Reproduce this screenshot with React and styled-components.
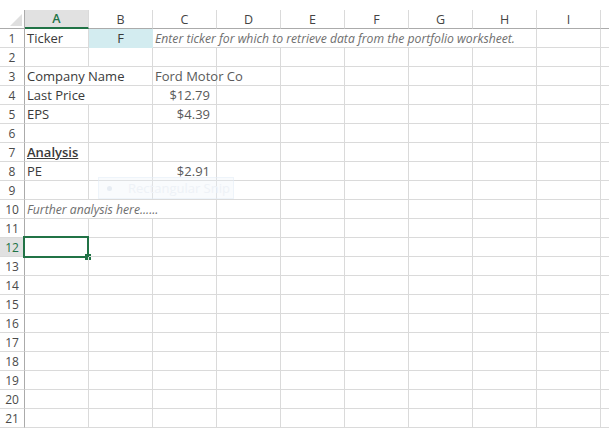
import React from "react";
import styled, { createGlobalStyle } from "styled-components";

const GlobalStyle = createGlobalStyle`
  html, body {
    margin: 0;
    padding: 0;
    background: #ffffff;
    overflow: hidden;
  }
  body {
    font-family: "Open Sans", "Noto Sans", sans-serif;
  }
`;

const COLS = ["A", "B", "C", "D", "E", "F", "G", "H", "I"];
const ROW_COUNT = 21;

// what sits in each row; span = how many columns the text runs over
const DATA = {
  1: [
    { col: 0, text: "Ticker", tone: "label" },
    { col: 1, text: "F", align: "center", fill: "#d3ecf0" },
    {
      col: 2,
      span: 6,
      text: "Enter ticker for which to retrieve data from the portfolio worksheet.",
      tone: "note",
    },
  ],
  3: [
    { col: 0, span: 2, text: "Company Name", tone: "label" },
    { col: 2, text: "Ford Motor Co", tone: "value" },
  ],
  4: [
    { col: 0, span: 2, text: "Last Price", tone: "label" },
    { col: 2, text: "$12.79", tone: "value", align: "right" },
  ],
  5: [
    { col: 0, text: "EPS", tone: "label" },
    { col: 2, text: "$4.39", tone: "value", align: "right" },
  ],
  7: [{ col: 0, text: "Analysis", tone: "heading" }],
  8: [
    { col: 0, text: "PE", tone: "label" },
    { col: 2, text: "$2.91", tone: "value", align: "right" },
  ],
  10: [{ col: 0, span: 3, text: "Further analysis here......", tone: "note" }],
};

const SELECTED_ROW = 12;

const App = () => {
  const rows = [];
  for (let r = 1; r <= ROW_COUNT; r++) {
    const items = DATA[r] || [];
    const cells = [];
    let c = 0;
    while (c < COLS.length + 1) {
      const item = items.find((it) => it.col === c);
      if (item) {
        cells.push(
          <Cell
            key={c}
            $span={item.span || 1}
            $align={item.align}
            $tone={item.tone}
            $fill={item.fill}
          >
            {item.text}
          </Cell>
        );
        c += item.span || 1;
      } else {
        cells.push(
          <Cell key={c}>
            {r === SELECTED_ROW && c === 0 && (
              <Selection>
                <FillHandle />
              </Selection>
            )}
          </Cell>
        );
        c += 1;
      }
    }
    rows.push(
      <React.Fragment key={r}>
        <RowHead $active={r === SELECTED_ROW}>{r}</RowHead>
        {cells}
      </React.Fragment>
    );
  }

  return (
    <>
      <GlobalStyle />
      <Page>
        <Sheet>
          <Corner>
            <CornerMark />
          </Corner>
          {COLS.map((l, i) => (
            <ColHead key={l} $active={i === 0}>
              {l}
            </ColHead>
          ))}
          <ColHead />
          {rows}
        </Sheet>
        <SnipGhost>
          <SnipDot />
          <SnipLabel>Rectangular Snip</SnipLabel>
        </SnipGhost>
      </Page>
    </>
  );
};

export default App;

const Page = styled.div`
  position: relative;
  width: 609px;
  height: 431px;
  padding-top: 10px;
  box-sizing: border-box;
  overflow: hidden;
`;

const Sheet = styled.div`
  display: grid;
  grid-template-columns: 25px repeat(9, 64px) 40px;
  grid-auto-rows: 19px;
`;

const Corner = styled.div`
  position: relative;
  box-sizing: border-box;
  border-right: 1px solid #ababab;
  border-bottom: 1px solid #ababab;
`;

const CornerMark = styled.div`
  position: absolute;
  right: 2px;
  bottom: 2px;
  width: 0;
  height: 0;
  border-left: 12px solid transparent;
  border-bottom: 12px solid #dfdfdf;
`;

const ColHead = styled.div`
  box-sizing: border-box;
  display: flex;
  align-items: center;
  justify-content: center;
  font-family: "Open Sans", "Noto Sans", sans-serif;
  font-size: 12.5px;
  color: ${(p) => (p.$active ? "#217346" : "#444444")};
  font-weight: ${(p) => (p.$active ? 600 : 400)};
  background: ${(p) => (p.$active ? "#e1e1e1" : "#ffffff")};
  border-right: 1px solid #dadada;
  border-bottom: ${(p) => (p.$active ? "2px solid #217346" : "1px solid #ababab")};
`;

const RowHead = styled.div`
  box-sizing: border-box;
  display: flex;
  align-items: center;
  justify-content: center;
  font-family: "Open Sans", "Noto Sans", sans-serif;
  font-size: 12px;
  color: ${(p) => (p.$active ? "#217346" : "#4a4a4a")};
  background: ${(p) => (p.$active ? "#e1e1e1" : "#ffffff")};
  border-right: 1px solid #ababab;
  border-bottom: 1px solid #dadada;
`;

const toneColor = {
  label: "#3a3a3a",
  heading: "#3a3a3a",
  value: "#5a5a5a",
  note: "#6e6e6e",
};

const Cell = styled.div`
  position: relative;
  grid-column: span ${(p) => p.$span || 1};
  box-sizing: border-box;
  display: flex;
  align-items: center;
  justify-content: ${(p) =>
    p.$align === "right" ? "flex-end" : p.$align === "center" ? "center" : "flex-start"};
  padding: ${(p) => (p.$align === "right" ? "0 6px 0 2px" : "0 2px")};
  white-space: nowrap;
  font-family: "Open Sans", "Noto Sans", sans-serif;
  font-size: ${(p) => (p.$tone === "note" ? "12.2px" : "13px")};
  font-style: ${(p) => (p.$tone === "note" ? "italic" : "normal")};
  font-weight: ${(p) => (p.$tone === "heading" ? 600 : 400)};
  text-decoration: ${(p) => (p.$tone === "heading" ? "underline" : "none")};
  color: ${(p) => toneColor[p.$tone] || "#3a3a3a"};
  background: ${(p) => p.$fill || "transparent"};
  border-right: 1px solid ${(p) => p.$fill || "#dadada"};
  border-bottom: 1px solid ${(p) => p.$fill || "#dadada"};
`;

const Selection = styled.div`
  position: absolute;
  left: -2px;
  top: -2px;
  width: 66px;
  height: 22px;
  box-sizing: border-box;
  border: 2px solid #217346;
  pointer-events: none;
`;

const FillHandle = styled.div`
  position: absolute;
  right: -4px;
  bottom: -4px;
  width: 6px;
  height: 6px;
  background: #217346;
`;

const SnipGhost = styled.div`
  position: absolute;
  left: 98px;
  top: 177px;
  width: 136px;
  height: 22px;
  display: flex;
  align-items: center;
  white-space: nowrap;
  background: rgba(235, 242, 250, 0.3);
  border: 1px solid rgba(225, 234, 246, 0.45);
  box-sizing: border-box;
`;

const SnipDot = styled.div`
  flex: none;
  width: 5px;
  height: 5px;
  border-radius: 50%;
  background: #e6ecf3;
  margin: 0 16px 0 8px;
`;

const SnipLabel = styled.span`
  font-family: "Open Sans", "Noto Sans", sans-serif;
  font-size: 13px;
  color: #eef2f7;
  white-space: nowrap;
`;
